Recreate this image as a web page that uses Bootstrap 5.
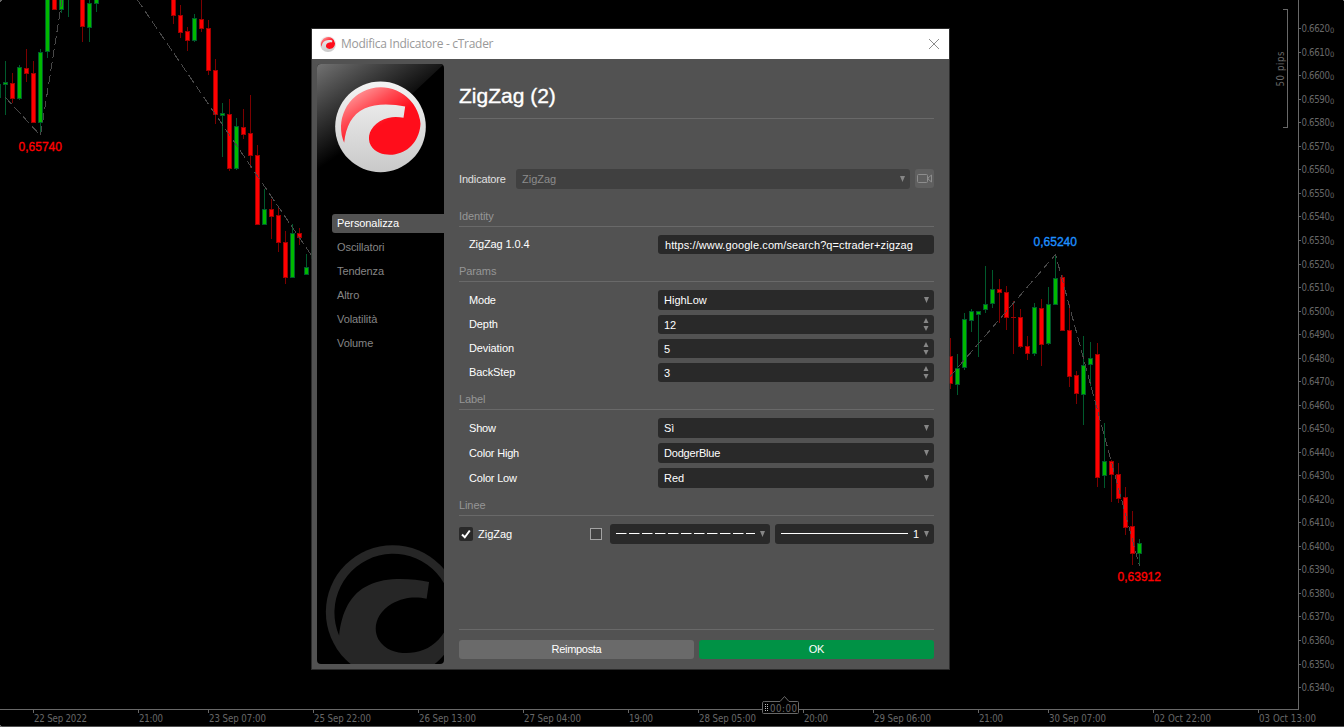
<!DOCTYPE html>
<html lang="it">
<head>
<meta charset="utf-8">
<meta name="viewport" content="width=device-width, initial-scale=1">
<title>Modifica Indicatore - cTrader</title>
<link href="https://cdn.jsdelivr.net/npm/bootstrap@5.3.0/dist/css/bootstrap.min.css" rel="stylesheet">
<style>
  body { background:#000; font:11px/14px "Liberation Sans", Arial, sans-serif; width:1344px; height:727px; overflow:hidden; }
  .chart-text { font-family:"DejaVu Sans Condensed","DejaVu Sans",sans-serif; font-size:9.6px; fill:#686868; }
  .swing { font-family:"Liberation Sans",Arial,sans-serif; font-size:12px; stroke-width:.35px; }
  .window { left:311px; top:28px; width:639px; height:642px; border:1px solid rgba(50,50,50,.85); background:#525252; background-clip:padding-box; color:#fff; }
  .titlebar { height:30px; background:#fff; color:#999; font:12px/16px "Open Sans","Noto Sans",sans-serif; letter-spacing:-.29px; padding:0 9px 0 8px; }
  .side { width:127px; height:600px; margin:5px 0 0 5px; background:#000; border-radius:4px; }
  .side .shine { left:0; top:0; }
  .side .nav { margin-top:150px; padding-left:15px; gap:5px; z-index:1; }
  .side .nav-link { height:19px; padding:0 0 0 5px; line-height:19px; color:#858585; border-radius:3px 0 0 3px; letter-spacing:-.08px; }
  .side .nav-link.active { background:#525252; color:#fff; }
  .pane { padding:0 16px 10px 15px; }
  .pane h1 { height:60px; margin:0 0 50px; padding-top:23px; font-size:21px; line-height:28px; border-bottom:1px solid #696969; font-weight:400; -webkit-text-stroke:.35px #fff; }
  .sect { height:28px; padding-bottom:3px; border-bottom:1px solid #696969; color:#969696; margin-bottom:8px; letter-spacing:-.1px; }
  .sect.first { height:38px; }
  .lbl { width:199px; padding-left:10px; letter-spacing:-.2px; }
  .lbl.up { padding-bottom:1px; letter-spacing:-.1px; }
  .fld { height:20px; background:#292929; border-radius:3px; padding:0 5px 0 6px; }
  .fld.low { height:19px; }
  .fld.off { background:#404040; color:#8c8c8c; }
  .addr { padding-left:7px; letter-spacing:.1px; }
  .rows { gap:5px; }
  .arr { flex:none; fill:#868686; }
  .cam { width:19px; height:19px; background:#5f5f5f; border-radius:3px; margin-left:5px; }
  .chk { width:14px; height:14px; background:#292929; border-radius:2px; }
  .swatch { width:12px; height:12px; border:1px solid #a3a3a3; background:#424242; }
  .foot { border-top:1px solid #696969; padding-top:10px; gap:5px; }
  .foot .btn { height:19px; padding:0; border:0; border-radius:3px; font-size:11px; line-height:19px; color:#fff; background:#6a6a6a; width:235px; letter-spacing:-.3px; }
  .foot .btn.ok { background:#009245; }
</style>
</head>
<body class="position-relative">
<svg id="chart" class="d-block" width="1344" height="727" shape-rendering="crispEdges">
  <g id="candles"></g>
  <g fill="none" stroke="#484848" stroke-width="1" stroke-dasharray="9 4">
    <path d="M5.500 97.500L40.500 135.500L62 0"/>
    <path d="M137.500 0L316 262"/>
    <path d="M950 376.500L1055.500 254.500L1139.500 566"/>
  </g>
  <g fill="none" stroke="#686868">
    <path d="M0 709.500H1298.500V0"/>
    <path d="M0 726.500H1344" stroke="#505050"/>
    <path d="M1283 9.500H1287.500V127.500H1283" />
  </g>
  <path d="M0 0h2l-2 2zM1344 0h-2l2 2zM0 724l2 3H0z" fill="#666"/>
  <g id="axes" class="chart-text"></g>
  <text class="chart-text" transform="translate(1283.500 86.500) rotate(-90)" textLength="35">50 pips</text>
  <g shape-rendering="auto">
    <path d="M764.500 701.500H780L784.500 696.500L789 701.500H797.500Q798.500 701.500 798.500 702.500V712.500Q798.500 713.500 797.500 713.500H763.500Q762.500 713.500 762.500 712.500V702.500Q762.500 701.500 764.500 701.500Z" fill="#000" stroke="#686868"/>
    <path d="M765.500 704V712M767.500 704V712" stroke="#bbb" stroke-dasharray="1 1" />
    <text class="chart-text" x="770" y="712" textLength="27">00:00</text>
  </g>
  <g class="swing">
    <text x="18.500" y="151" textLength="43.500" fill="#f00" stroke="#f00">0,65740</text>
    <text x="1033.500" y="246" textLength="43.500" fill="#1e90ff" stroke="#1e90ff">0,65240</text>
    <text x="1117.500" y="581" textLength="43.500" fill="#f00" stroke="#f00">0,63912</text>
  </g>
</svg>

<main class="window position-absolute">
  <header class="titlebar d-flex align-items-center">
    <svg width="16" height="16" viewBox="-136 -136 272 272"><use href="#logo"/></svg>
    <span style="margin-left:5px">Modifica Indicatore - cTrader</span>
    <svg class="ms-auto" width="12" height="12" viewBox="0 0 12 12" fill="none" stroke="#8c8c8c"><path d="M1 1L11 11M11 1L1 11"/></svg>
  </header>
  <div class="d-flex">
    <aside class="side position-relative overflow-hidden flex-shrink-0">
      <svg class="position-absolute shine" width="127" height="600">
        <defs>
          <linearGradient id="gl" gradientUnits="userSpaceOnUse" x1="0" y1="0" x2="49" y2="73"><stop offset="0" stop-color="#727272"/><stop offset=".5" stop-color="#383838"/><stop offset="1" stop-color="#000"/></linearGradient>
          <linearGradient id="ring" x1="0" y1="0" x2="0" y2="1"><stop offset="0" stop-color="#f4f4f4"/><stop offset="1" stop-color="#c9c9c9"/></linearGradient>
          <linearGradient id="redg" gradientUnits="userSpaceOnUse" x1="-60" y1="-120" x2="10" y2="-10"><stop offset="0" stop-color="#ff9a9c"/><stop offset=".5" stop-color="#ff4d55"/><stop offset="1" stop-color="#ff0d1b"/></linearGradient>
          <path id="swoosh" d="M-109 48A119.500 119.500 0 1 1 120 -9C118 36 88 76 45 82C23 86 -12 84 -29 56C-42 31 -32 1 -2 -17C23 -31 48 -32 69 -27L74 -61C35 -69 -15 -71 -48 -55C-86 -38 -104 0 -109 48Z"/>
          <g id="logo"><circle r="136" fill="url(#ring)"/><use href="#swoosh" fill="url(#redg)"/></g>
        </defs>
        <path d="M0 0H127L0 119Z" fill="url(#gl)"/>
        <g transform="translate(63.500 62.800) scale(.3333)"><use href="#logo"/></g>
        <g transform="translate(75.700 548) scale(.4915)"><circle r="136" fill="#262626"/><use href="#swoosh" fill="#000"/></g>
      </svg>
      <nav class="nav flex-column position-relative">
        <a class="nav-link active">Personalizza</a>
        <a class="nav-link">Oscillatori</a>
        <a class="nav-link">Tendenza</a>
        <a class="nav-link">Altro</a>
        <a class="nav-link">Volatilità</a>
        <a class="nav-link">Volume</a>
      </nav>
    </aside>
    <section class="pane d-flex flex-column flex-grow-1" style="height:610px">
      <h1>ZigZag (2)</h1>
      <div class="d-flex">
        <span style="width:57px;line-height:20px;color:#e0e0e0;letter-spacing:-.15px">Indicatore</span>
        <div class="fld off d-flex align-items-center justify-content-between flex-grow-1">ZigZag<svg class="arr" width="5" height="6"><path d="M0 0H5L2.500 6Z"/></svg></div>
        <div class="cam"><svg class="d-block" width="19" height="19" fill="none" stroke="#8d8d8d"><rect x="2.500" y="5.500" width="10" height="8" rx="1"/><path d="M13 9L16.500 6V13L13 10Z"/></svg></div>
      </div>
      <div class="sect first d-flex align-items-end">Identity</div>
      <div class="d-flex align-items-center"><span class="lbl up">ZigZag 1.0.4</span><div class="fld low addr flex-grow-1 d-flex align-items-center">https://www.google.com/search?q=ctrader+zigzag</div></div>
      <div class="sect d-flex align-items-end">Params</div>
      <div class="rows d-flex flex-column">
        <div class="d-flex align-items-center"><span class="lbl">Mode</span><div class="fld flex-grow-1 d-flex align-items-center justify-content-between">HighLow<svg class="arr" width="5" height="6"><path d="M0 0H5L2.500 6Z"/></svg></div></div>
        <div class="d-flex align-items-center"><span class="lbl up">Depth</span><div class="fld low flex-grow-1 d-flex align-items-center justify-content-between">12<svg class="arr" width="6" height="13"><path d="M3 0L5.500 5H.5ZM3 13L5.500 8H.5Z"/></svg></div></div>
        <div class="d-flex align-items-center"><span class="lbl up">Deviation</span><div class="fld low flex-grow-1 d-flex align-items-center justify-content-between">5<svg class="arr" width="6" height="13"><path d="M3 0L5.500 5H.5ZM3 13L5.500 8H.5Z"/></svg></div></div>
        <div class="d-flex align-items-center"><span class="lbl up">BackStep</span><div class="fld low flex-grow-1 d-flex align-items-center justify-content-between">3<svg class="arr" width="6" height="13"><path d="M3 0L5.500 5H.5ZM3 13L5.500 8H.5Z"/></svg></div></div>
      </div>
      <div class="sect d-flex align-items-end">Label</div>
      <div class="rows d-flex flex-column">
        <div class="d-flex align-items-center"><span class="lbl">Show</span><div class="fld flex-grow-1 d-flex align-items-center justify-content-between">Sì<svg class="arr" width="5" height="6"><path d="M0 0H5L2.500 6Z"/></svg></div></div>
        <div class="d-flex align-items-center"><span class="lbl">Color High</span><div class="fld flex-grow-1 d-flex align-items-center justify-content-between"><span style="letter-spacing:-.2px">DodgerBlue</span><svg class="arr" width="5" height="6"><path d="M0 0H5L2.500 6Z"/></svg></div></div>
        <div class="d-flex align-items-center"><span class="lbl">Color Low</span><div class="fld flex-grow-1 d-flex align-items-center justify-content-between">Red<svg class="arr" width="5" height="6"><path d="M0 0H5L2.500 6Z"/></svg></div></div>
      </div>
      <div class="sect d-flex align-items-end">Linee</div>
      <div class="d-flex align-items-center">
        <span class="chk"><svg class="d-block" width="14" height="14" fill="none" stroke="#fff" stroke-width="2"><path d="M3 7.500L5.800 10.300L10.800 3.500"/></svg></span>
        <span style="margin-left:5px;width:112px">ZigZag</span>
        <span class="swatch"></span>
        <div class="fld d-flex align-items-center justify-content-between" style="width:160px;margin:0 5px 0 8px"><svg width="140" height="2"><path d="M0 .5H139" stroke="#fff" stroke-dasharray="10.500 2.500"/></svg><svg class="arr" width="5" height="6"><path d="M0 0H5L2.500 6Z"/></svg></div>
        <div class="fld d-flex align-items-center justify-content-between flex-grow-1"><svg width="127" height="2"><path d="M0 .5H127" stroke="#fff"/></svg><span>1</span><svg class="arr" width="5" height="6"><path d="M0 0H5L2.500 6Z"/></svg></div>
      </div>
      <div class="foot d-flex mt-auto"><button class="btn">Reimposta</button><button class="btn ok">OK</button></div>
    </section>
  </div>
</main>

<script src="https://cdn.jsdelivr.net/npm/bootstrap@5.3.0/dist/js/bootstrap.bundle.min.js"></script>
<script>
// Each candle: centre x, direction (1 up, 0 down), wick top, body top, body bottom, wick bottom
const data = [
[-2,1,84,84,98,98],[5,1,61,82,85,115],[12,0,73,83,99,103],[19,1,65,67,99,100],[26,0,49,68,74,82],[33,0,61,73,123,123],[40,1,49,52,123,135],
[47,1,-5,-5,52,58],[54,0,-5,-5,10,10],[61,1,-5,-5,10,13],[68,1,-5,-5,-4,17],[82,0,-5,-5,27,42],[89,1,-5,3,28,42],[96,1,-5,-5,4,12],
[173,0,-5,-5,16,24],[180,0,5,15,33,38],[187,0,27,31,41,51],[194,1,14,18,41,42],[201,0,-5,19,29,32],[208,0,20,28,71,75],[215,0,59,70,115,124],
[222,1,103,113,116,157],[229,0,99,114,169,171],[236,1,118,126,169,170],[243,0,109,127,135,139],[250,0,95,133,156,168],[257,0,145,155,225,225],
[264,1,189,209,225,225],[271,0,199,209,217,239],[278,0,207,215,243,252],[285,0,231,242,278,284],[292,1,224,233,278,278],[299,0,228,233,238,245],
[306,1,254,267,275,275],[313,1,232,232,259,259],
[950,0,338,356,384,389],[957,1,354,368,385,395],[964,1,313,319,368,370],[971,1,309,311,321,332],[978,1,311,311,315,357],[985,1,266,304,310,313],
[992,1,270,289,304,308],[999,0,279,289,293,323],[1006,0,286,292,318,330],[1013,0,301,317,318,354],[1020,0,309,317,347,348],[1027,0,336,346,354,360],
[1034,1,303,307,354,356],[1041,0,299,308,345,366],[1048,1,287,304,344,345],[1055,1,255,278,305,305],[1062,0,275,277,331,331],[1069,0,304,330,377,387],
[1076,0,371,375,394,404],[1083,1,336,365,395,425],[1090,1,342,358,365,386],[1097,0,343,354,478,487],[1104,1,423,461,476,488],[1111,0,460,461,475,502],
[1118,0,463,474,499,503],[1125,0,487,497,528,535],[1132,0,511,526,554,565],[1139,1,539,543,554,566]];
let s = '';
for (const [x,up,wt,bt,bb,wb] of data) {
  s += `<rect x="${x}" y="${wt}" width="1" height="${wb-wt}" fill="${up?'#005a2c':'#7d0000'}"/>`;
  s += `<rect x="${x-2}" y="${bt}" width="5" height="${bb-bt}" fill="${up?'#005a2c':'#a00000'}"/>`;
  if (bb-bt > 2) s += `<rect x="${x-1}" y="${bt+1}" width="3" height="${bb-bt-2}" fill="${up?'#00b900':'#ff0000'}"/>`;
}
document.getElementById('candles').innerHTML = s;

let a = '';
for (let i = 0; i <= 28; i++) {
  const y = Math.round(28.2 + i*23.53);
  a += `<rect x="1299" y="${y}" width="2" height="1"/><text x="1301.500" y="${y+4}" textLength="28.500">${(0.662-i*0.001).toFixed(4)}</text><text x="1330" y="${y+5}" style="font-size:7.5px">0</text>`;
}
const times = [[33,'22 Sep 2022',53],[138,'21:00',24],[208,'23 Sep 07:00',57],[313,'25 Sep 22:00',57],[418,'26 Sep 13:00',57],[523,'27 Sep 04:00',57],[628,'19:00',24],[698,'28 Sep 05:00',57],[803,'20:00',24],[873,'29 Sep 06:00',57],[978,'21:00',24],[1048,'30 Sep 07:00',57],[1153,'02 Oct 22:00',57],[1258,'03 Oct 13:00',57]];
for (const [x,t,w] of times)
  a += `<rect x="${x}" y="710" width="1" height="3"/><text x="${x+1}" y="722" textLength="${w}">${t}</text>`;
document.getElementById('axes').innerHTML = a;
</script>
</body>
</html>
